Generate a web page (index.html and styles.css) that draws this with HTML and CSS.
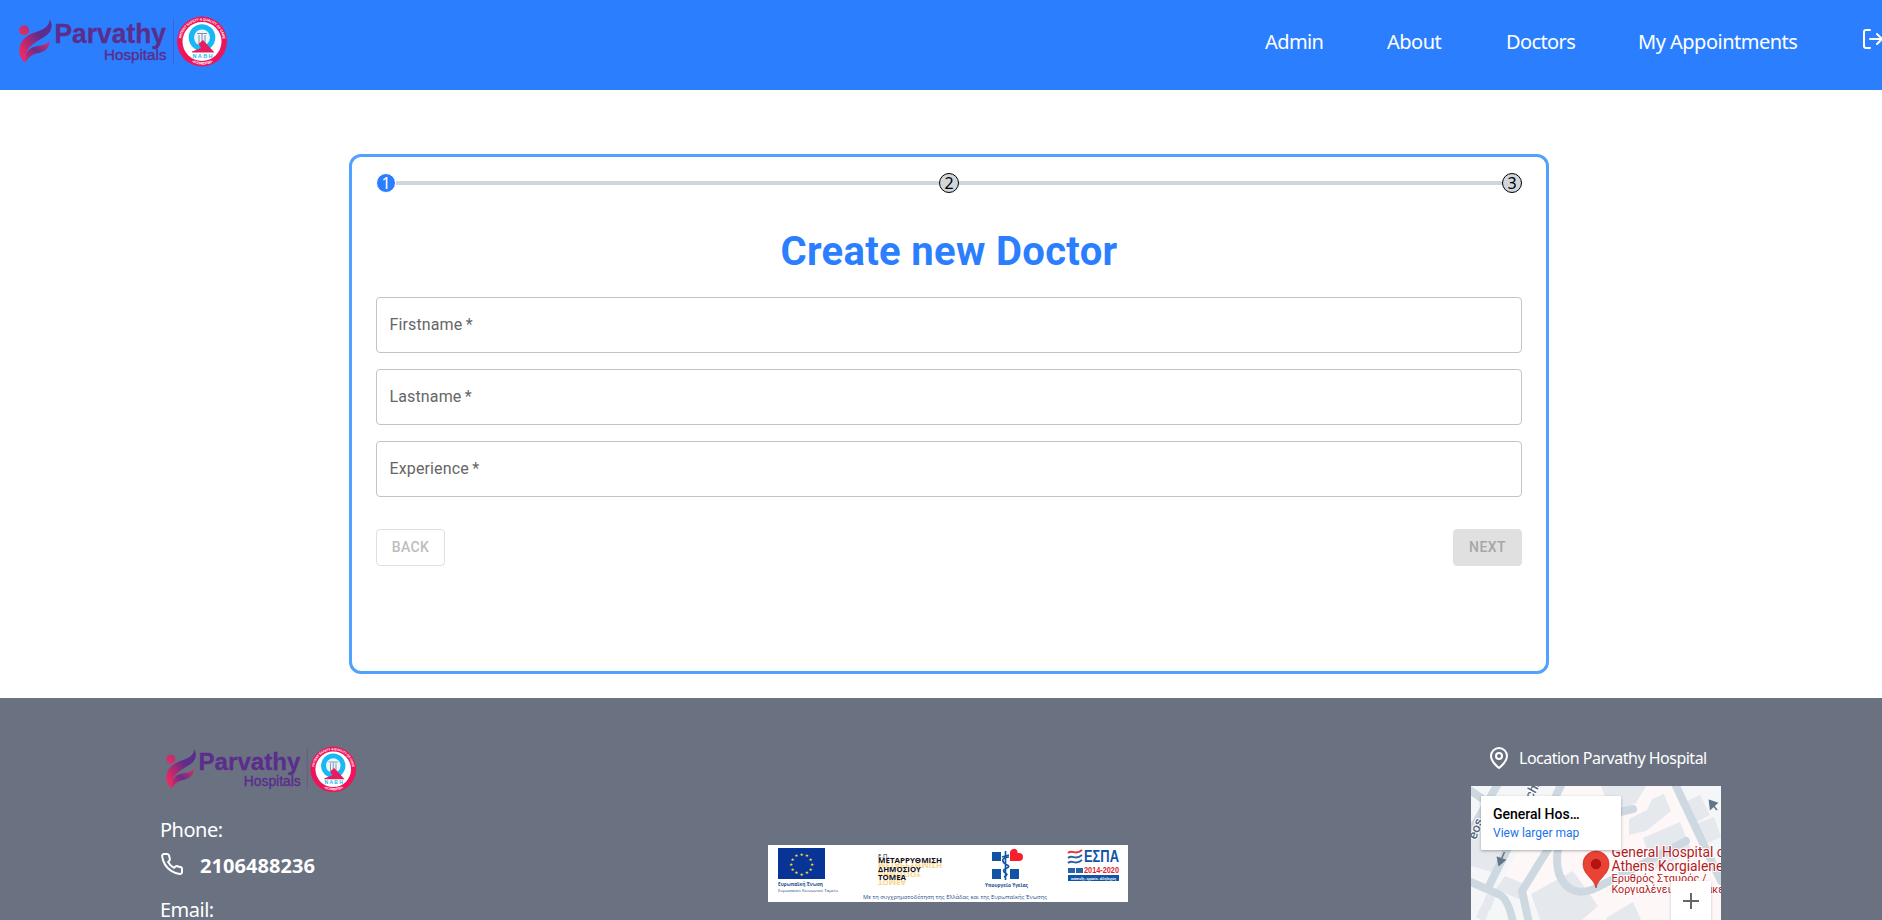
FILE: index.html
```html
<!DOCTYPE html>
<html lang="en">
<head>
<meta charset="utf-8">
<title>Parvathy Hospitals</title>
<link rel="stylesheet" href="styles.css">
</head>
<body>
<svg class="defs" width="0" height="0" aria-hidden="true">
  <defs>
    <linearGradient id="wing" x1="0" y1="1" x2="1" y2="0"><stop offset=".15" stop-color="#ef2560"/><stop offset=".65" stop-color="#5b2d8c"/></linearGradient>
    <linearGradient id="leaf" x1="0" y1="1" x2="1" y2="0"><stop offset="0" stop-color="#f0245e"/><stop offset=".5" stop-color="#6b2d88"/><stop offset="1" stop-color="#e02a68"/></linearGradient>
    <linearGradient id="head" x1="0" y1="1" x2="1" y2="0"><stop offset="0" stop-color="#f0285f"/><stop offset="1" stop-color="#a83479"/></linearGradient>
    <path id="ringTop" d="M162 25.500a21 21 0 0 1 42 0"/>
    <path id="ringBottom" d="M160.500 25.500a23 23 0 0 0 46 0"/>
    <symbol id="logo" viewBox="0 0 210 52">
      <circle cx="5.200" cy="14.300" r="5" fill="url(#head)"/>
      <path d="M30.800 3.500C33.500 8 33.300 13 29.500 17.500C26 21.500 18 24.500 13 29C9 32.500 5.500 36 5.800 47C2.500 43 -1 38 .8 31C2.500 24 7 20 13 17.500C20 14.500 30 13 30.800 3.500Z" fill="url(#wing)"/>
      <path d="M30.500 25C30.500 32 26 35.500 20 37C13 38.500 9 41 6.500 46.500C5.500 40 7 34 14 31.200C20 29 26 30.500 30.500 25Z" fill="url(#leaf)"/>
      <text class="logo-name" x="35.500" y="26.500" textLength="111.500" lengthAdjust="spacingAndGlyphs">Parvathy</text>
      <text class="logo-sub" x="85" y="44" textLength="62.500" lengthAdjust="spacingAndGlyphs">Hospitals</text>
      <path class="logo-rule" d="M154.500 2.500V48"/>
      <circle cx="183" cy="25.500" r="25" fill="#ee145b"/>
      <circle cx="183" cy="25.500" r="19.500" fill="#fff"/>
      <text class="ring-text"><textPath href="#ringTop" startOffset="3" textLength="60">PATIENT SAFETY &amp; QUALITY OF CARE</textPath></text>
      <text class="ring-text"><textPath href="#ringBottom" startOffset="25" textLength="22">• ACCREDITED •</textPath></text>
      <circle cx="183" cy="21.500" r="13.300" fill="#16b9f3"/>
      <circle cx="183" cy="21.500" r="8" fill="#e9f7fd"/>
      <path d="M178 17.500h10M180 19v9M183 18v10M186 19v9" stroke="#73819e" stroke-width=".9" fill="none"/>
      <path d="M173 35.500L182 32L179.500 28L184 24L195.500 36.500H173Z" fill="#e51c5d"/>
      <text class="nabh" x="173.500" y="42" textLength="20">NABH</text>
    </symbol>
  </defs>
</svg>

<header class="topbar">
  <svg class="topbar-logo"><use href="#logo"/></svg>
  <nav class="nav">
    <a class="nav-admin">Admin</a>
    <a class="nav-about">About</a>
    <a class="nav-doctors">Doctors</a>
    <a class="nav-appointments">My Appointments</a>
    <svg class="icon logout" viewBox="0 0 24 24"><path d="M9 21H5a2 2 0 0 1-2-2V5a2 2 0 0 1 2-2h4M16 17l5-5-5-5M21 12H9"/></svg>
  </nav>
</header>

<main class="main">
  <section class="card">
    <div class="stepper">
      <span class="step step-active">1</span><span class="track"></span>
      <span class="step">2</span><span class="track"></span>
      <span class="step">3</span>
    </div>
    <h1 class="title">Create new Doctor</h1>
    <form class="form">
      <label class="field">Firstname&#8201;*</label>
      <label class="field">Lastname&#8201;*</label>
      <label class="field">Experience&#8201;*</label>
      <div class="actions">
        <button class="btn btn-back" type="button" disabled>BACK</button>
        <button class="btn btn-next" type="button" disabled>NEXT</button>
      </div>
    </form>
  </section>
</main>

<footer class="footer">
  <div class="contact">
    <svg class="footer-logo"><use href="#logo"/></svg>
    <p class="contact-label phone-label">Phone:</p>
    <p class="contact-row"><svg class="icon" viewBox="0 0 24 24"><path d="M22 16.920v3a2 2 0 0 1-2.180 2 19.790 19.790 0 0 1-8.630-3.070 19.500 19.500 0 0 1-6-6 19.790 19.790 0 0 1-3.070-8.670A2 2 0 0 1 4.110 2h3a2 2 0 0 1 2 1.720 12.840 12.840 0 0 0 .7 2.810 2 2 0 0 1-.45 2.110L8.090 9.910a16 16 0 0 0 6 6l1.270-1.270a2 2 0 0 1 2.110-.45 12.840 12.840 0 0 0 2.810.7A2 2 0 0 1 22 16.920z"/></svg><b class="number">2106488236</b></p>
    <p class="contact-label">Email:</p>
  </div>

  <svg class="funding" viewBox="0 0 360 57">
    <rect width="360" height="57" fill="#fff"/>
    <rect x="10" y="3" width="47" height="31" fill="#073496"/>
    <g class="stars">
      <text x="33.500" y="10.500">★</text><text x="38.700" y="11.900">★</text><text x="42.500" y="15.500">★</text><text x="43.900" y="20.500">★</text><text x="42.500" y="25.500">★</text><text x="38.700" y="29.200">★</text><text x="33.500" y="30.500">★</text><text x="28.300" y="29.200">★</text><text x="24.500" y="25.500">★</text><text x="23.100" y="20.500">★</text><text x="24.500" y="15.500">★</text><text x="28.300" y="11.900">★</text>
    </g>
    <text class="eu-bold" x="10" y="40.500" textLength="45" lengthAdjust="spacingAndGlyphs">Ευρωπαϊκή Ένωση</text>
    <text class="eu" x="10" y="46.500" textLength="60" lengthAdjust="spacingAndGlyphs">Ευρωπαϊκό Κοινωνικό Ταμείο</text>
    <text class="ep" x="110" y="12.500" textLength="11" lengthAdjust="spacingAndGlyphs">Ε.Π.</text>
    <g class="echo" aria-hidden="true"><text x="110" y="-17.500" textLength="64" lengthAdjust="spacingAndGlyphs" transform="scale(1 -1)">ΜΕΤΑΡΡΥΘΜΙΣΗ</text><text x="110" y="-26.500" textLength="43" lengthAdjust="spacingAndGlyphs" transform="scale(1 -1)">ΔΗΜΟΣΙΟΥ</text><text x="110" y="-35" textLength="28" lengthAdjust="spacingAndGlyphs" transform="scale(1 -1)">ΤΟΜΕΑ</text></g>
    <g class="reform"><text x="110" y="17.500" textLength="64" lengthAdjust="spacingAndGlyphs">ΜΕΤΑΡΡΥΘΜΙΣΗ</text><text x="110" y="26.500" textLength="43" lengthAdjust="spacingAndGlyphs">ΔΗΜΟΣΙΟΥ</text><text x="110" y="35" textLength="28" lengthAdjust="spacingAndGlyphs">ΤΟΜΕΑ</text></g>
    <path d="M224 7h9v9h-9zM224 24h9v10h-9zM242 24h9v10h-9z" fill="#1154a5"/>
    <path d="M242 16V7.500a4 4 0 0 1 7.500-1.500V8H251a4 4 0 0 1 0 8z" fill="#f5202d"/>
    <path d="M237.500 6V35M234 12l7-2M241 12C231 13 235 18 239 20C245 23 233 23 236 27C240 29 240 30 236 32" fill="none" stroke="#1154a5" stroke-width="1.600"/>
    <text class="ministry" x="217" y="41.500" textLength="43" lengthAdjust="spacingAndGlyphs">Υπουργείο Υγείας</text>
    <path d="M300 8c5-4 7 3 14-3" stroke="#e3333c" stroke-width="2" fill="none"/><path d="M300 13c5-4 7 3 14-3M300 18c5-4 7 3 14-3" stroke="#2862a9" stroke-width="2" fill="none"/>
    <text class="espa" x="316" y="17" textLength="35" lengthAdjust="spacingAndGlyphs">ΕΣΠΑ</text>
    <path d="M300 23h7v5h-7zM308 23h7v5h-7z" fill="#2861aa"/>
    <text class="years" x="316" y="28" textLength="35" lengthAdjust="spacingAndGlyphs">2014-2020</text>
    <rect x="300" y="30" width="51" height="6" fill="#1154a5"/>
    <text class="slogan" x="303" y="34.500" textLength="45" lengthAdjust="spacingAndGlyphs">ανάπτυξη - εργασία - αλληλεγγύη</text>
    <text class="cofund" x="95" y="53.500" textLength="184" lengthAdjust="spacingAndGlyphs">Με τη συγχρηματοδότηση της Ελλάδας και της Ευρωπαϊκής Ένωσης</text>
  </svg>

  <div class="location">
    <p class="location-title"><svg class="icon" viewBox="0 0 24 24"><path d="M20 10c0 6-8 12-8 12s-8-6-8-12a8 8 0 0 1 16 0Z"/><circle cx="12" cy="10" r="3"/></svg><span class="location-text">Location Parvathy Hospital</span></p>
    <div class="map">
      <svg class="map-art" viewBox="0 0 250 150">
        <rect width="250" height="150" fill="#f5f6f8"/>
        <path d="M50 60L90 0H205L250 100V150H90L55 110L28 98Z" fill="#fef7f8"/>
        <g fill="#e5e8ed"><path d="M130 0h45l-10 17-25 10zM158 33l18-9 5-11 12-5 7 17-25 20-17 4zM172 52l37-16 12 30-38 18zM212 17l17-8 10 20-17 9zM225 38l18-7 7 20-18 8zM60 108l42-23 25 35-34 30H75zM34 90l22 9-8 14-23-10zM135 132l27-16 15 34h-35zM0 50l20-17 20 20-12 35-28-8zM16 108l8 3-5 14-9-4zM10 120l8 4-4 12-9-5z"/></g>
        <g fill="none" stroke="#ced8e1" stroke-width="8" stroke-linecap="round"><path d="M0 5L22 20M28-4L0 45M92-5L80 20M82 55L51 105L62 155M87 63C82 95 100 114 125 102L160 84L215 55M145 27L162 23M-5 94L27 108Q40 112 45 155M18 100L38 60M205 0L250 95"/></g>
        <g class="arrows"><path d="M33.500 66L30 74"/><path d="M26.500 71.500L34 74L28 79Z"/><path d="M246 24L241 18"/><path d="M238.500 14.500L246 17L239.500 23Z"/></g>
        <text class="street" transform="translate(61 14) rotate(-61)">cha</text>
        <text class="street" transform="translate(5 54) rotate(-70)">eos</text>
        <path d="M125 102C123 92 112 89 112 78a13 13 0 0 1 26 0C138 89 127 92 125 102Z" fill="#ea4335" stroke="#b8221b" stroke-width=".6"/><circle cx="125" cy="78" r="5.200" fill="#b31412"/>
        <g class="place"><text x="140.500" y="71" textLength="118" lengthAdjust="spacingAndGlyphs">General Hospital of</text><text x="140.500" y="85" textLength="123" lengthAdjust="spacingAndGlyphs">Athens Korgialeneio</text></g>
        <g class="place place-small"><text x="140.500" y="95.700" textLength="95" lengthAdjust="spacingAndGlyphs">Ερυθρός Σταυρός /</text><text x="140.500" y="107" textLength="122" lengthAdjust="spacingAndGlyphs">Κοργιαλένειο Μπενάκειο</text></g>
      </svg>
      <div class="map-card"><span class="map-name">General Hos…</span><span class="map-link">View larger map</span></div>
      <div class="zoom-in"></div>
    </div>
  </div>
</footer>
</body>
</html>
```
FILE: styles.css
```css
* { box-sizing: border-box; }
html, body { margin: 0; height: 100%; overflow: hidden; }
body { font-family: "Noto Sans", "Open Sans", sans-serif; background: #fff; color: #000; width: 1882px; }
p, h1 { margin: 0; }
.defs { position: absolute; }
.icon { width: 24px; height: 24px; flex: none; fill: none; stroke: #fff; stroke-width: 2; stroke-linecap: round; stroke-linejoin: round; }

.topbar { height: 90px; background: #2b7fff; display: flex; justify-content: space-between; padding-left: 19px; overflow: hidden; }
.topbar-logo { width: 210px; height: 52px; margin-top: 16px; }
.logo-name { font: bold 27px "Liberation Sans", sans-serif; fill: #5b2d8c; stroke: #5b2d8c; stroke-width: .3; }
.logo-sub { font: 15.500px "Liberation Sans", sans-serif; fill: #5b2d8c; stroke: #5b2d8c; stroke-width: .4; }
.logo-rule { stroke: #5b2d8c; stroke-width: 1; opacity: .35; }
.ring-text { font: bold 3.500px "Liberation Sans", sans-serif; fill: #fff; }
.nabh { font: bold 5.500px "Liberation Sans", sans-serif; fill: #16b9f3; }

.nav { display: flex; width: 617px; height: 24px; margin-top: 29px; color: #fff; font-size: 20px; line-height: 26px; white-space: nowrap; }
.nav a { flex: none; }
.nav-admin { width: 122px; letter-spacing: -.6px; }
.nav-about { width: 119px; letter-spacing: -.5px; }
.nav-doctors { width: 132px; letter-spacing: -.6px; }
.nav-appointments { width: 223px; letter-spacing: -.5px; }
.logout { margin-top: -2px; }

.main { height: 608px; padding: 64px 0 24px 349px; }
.card { width: 1200px; height: 520px; border: 3px solid #51a2ff; border-radius: 12px; padding: 16px 24px; }
.stepper { display: flex; align-items: center; height: 20px; }
.step { flex: none; width: 20px; height: 20px; border: 1px solid #000; border-radius: 50%; background: #d1d5dc; font-size: 16px; line-height: 18px; text-align: center; }
.step-active { background: #2b7fff; border-color: #fff; color: #fff; }
.track { flex: 1; height: 4px; background: #d1d5dc; }
.title { margin-top: 35px; height: 48px; text-align: center; font: 700 40px/48px Roboto, sans-serif; letter-spacing: .33px; color: #2b7fff; }
.form { margin-top: 21px; display: flex; flex-direction: column; gap: 16px; font-family: Roboto, sans-serif; }
.field { height: 56px; border: 1px solid #c4c4c4; border-radius: 4px; padding: 0 12.500px; font-size: 16px; line-height: 54px; letter-spacing: .13px; color: #666; }
.actions { display: flex; justify-content: space-between; margin-top: 16px; }
.btn { width: 69px; height: 37px; border-radius: 4px; border: 1px solid #e0e0e0; padding: 0 0 2px; background: #fff; font: 500 14px/24px Roboto, sans-serif; letter-spacing: .4px; color: #bdbdbd; }
.btn-next { background: #e0e0e0; color: #a6a6a6; }

.footer { height: 222px; overflow: hidden; background: #6a7282; color: #fff; display: flex; justify-content: space-between; padding: 48px 161px 0 160px; }
.contact { width: 260px; display: flex; flex-direction: column; }
.contact > * { flex: none; }
.footer-logo { width: 192px; height: 47.500px; margin: 0 0 0 6px; }
.footer-logo .logo-rule { opacity: 1; }
.contact-label { font-size: 20px; line-height: 28px; letter-spacing: -.5px; }
.phone-label { margin-top: 22.500px; }
.contact-row { display: flex; height: 52px; padding-top: 8px; }
.number { margin: 2px 0 0 16px; font-size: 20px; line-height: 24px; letter-spacing: .07px; }

.funding { width: 360px; height: 57px; margin: 99px 0 0 0; position: relative; left: 2px; }
.stars { font: 4.500px "DejaVu Sans", sans-serif; fill: #f5da2a; text-anchor: middle; }
.eu-bold { font: bold 5px "Open Sans", sans-serif; fill: #234f8a; }
.eu { font: 4px "Open Sans", sans-serif; fill: #234f8a; }
.ep { font: 5px "Open Sans", sans-serif; fill: #222; }
.reform, .echo { font: bold 6.200px "Open Sans", sans-serif; fill: #111; }
.echo { fill: #fbd38a; }
.ministry { font: bold 5px "Open Sans", sans-serif; fill: #1b4f91; }
.espa { font: bold 16px "Liberation Sans", sans-serif; fill: #1154a5; }
.years { font: bold 9.500px "Liberation Sans", sans-serif; fill: #df252f; }
.slogan { font: bold 3.500px "Open Sans", sans-serif; fill: #fff; }
.cofund { font: 6px "Open Sans", sans-serif; fill: #234f8a; }

.location { width: 250px; }
.location-title { height: 40px; padding-left: 16px; display: flex; gap: 8px; font-size: 16px; line-height: 25px; white-space: nowrap; }
.location-text { letter-spacing: -.5px; }
.map { position: relative; height: 150px; overflow: hidden; font-family: Roboto, sans-serif; }
.map-art { display: block; width: 250px; height: 150px; }
.arrows { fill: #63758a; stroke: #63758a; stroke-width: 1.500; }
.street { font: 500 13px Roboto, sans-serif; fill: #53677c; stroke: #fff; stroke-width: 2; paint-order: stroke; }
.place { font: 400 14px Roboto, sans-serif; fill: #b3191c; stroke: #fff; stroke-width: 2; paint-order: stroke; }
.place-small { font-size: 11.500px; }
.map-card { position: absolute; left: 10px; top: 10px; width: 140px; height: 54px; padding: 9px 12px; background: #fff; border-radius: 1px; box-shadow: 0 1px 3px rgba(0,0,0,.3); display: flex; flex-direction: column; }
.map-name { font-size: 14px; line-height: 19px; font-weight: 500; color: #000; white-space: nowrap; }
.map-link { font-size: 12px; line-height: 18px; color: #1a73e8; white-space: nowrap; }
.zoom-in { position: absolute; left: 200px; top: 95px; width: 40px; height: 56px; background: linear-gradient(#666,#666) 12px 19px / 16px 2px no-repeat, linear-gradient(#666,#666) 19px 12px / 2px 16px no-repeat, #fff; box-shadow: 0 1px 3px rgba(0,0,0,.2); }
```
